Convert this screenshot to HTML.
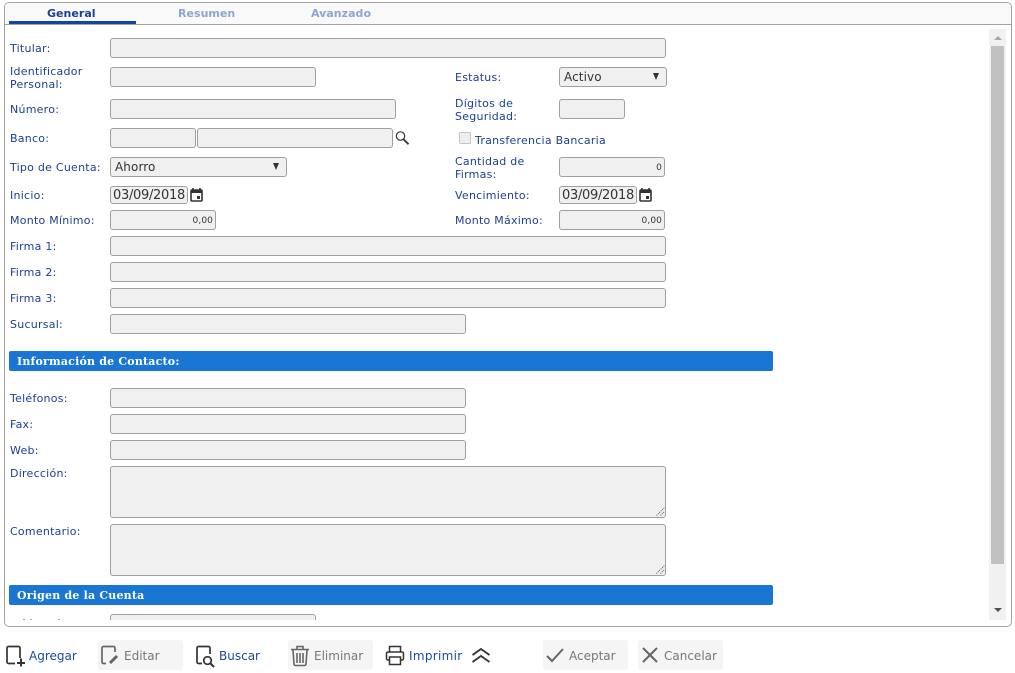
<!DOCTYPE html>
<html lang="es"><head><meta charset="utf-8"><title>Cuenta</title>
<style>
html,body{margin:0;padding:0;background:#fff}
body{width:1015px;height:673px;position:relative;overflow:hidden;font-family:"DejaVu Sans","Liberation Sans",sans-serif}
div,span,svg{position:absolute;box-sizing:border-box}
.panel{left:4px;top:2px;width:1008px;height:625px;border:1px solid #a3a3a3;border-radius:5px}
.tabs{left:5px;top:3px;width:1006px;height:22px;background:#f9f9f9;border-bottom:1px solid #a3a3a3;border-radius:4px 4px 0 0}
.tab{top:7px;font:bold 11px "DejaVu Sans",sans-serif;line-height:14px;color:#8ea6d2;white-space:nowrap;letter-spacing:.03px}
.ink{left:9px;top:21px;width:127px;height:3px;background:#0d47a1}
.l{font-size:11px;line-height:13px;color:#1c3f94;white-space:nowrap;letter-spacing:.25px}
.i{background:#f0f0f0;border:1px solid #a0a0a0;border-radius:3px;height:20px}
.n{font-size:9px;line-height:20px;color:#333;text-align:right;padding-right:2px;letter-spacing:.1px}
.s{font:12px "DejaVu Sans",sans-serif;line-height:19px;color:#333;padding-left:4px;letter-spacing:.1px}
.s:after{content:"";position:absolute;right:7px;top:5px;border:3.5px solid transparent;border-top:7px solid #333;border-bottom:0}
.d{height:18px;font:13px "DejaVu Sans",sans-serif;line-height:18px;color:#333;padding-left:2px;white-space:nowrap;overflow:hidden;width:78px;letter-spacing:-.3px}
.h{left:9px;width:764px;height:20px;background:#1976d2;border-radius:2px;color:#fff;font:bold 11px "DejaVu Serif","DejaVu Sans",sans-serif;line-height:21px;padding-left:8px;letter-spacing:.2px}
.b{height:30px;top:640px;border-radius:3px}
.off{background:#f5f5f5}
.t{top:648px;font:12px "DejaVu Sans",sans-serif;line-height:16px;white-space:nowrap;color:#1c4aa0}
.t.g{color:#777}
</style></head><body>
<div class="panel"></div>
<div class="tabs"></div>
<div class="ink"></div>
<div class="tab" style="left:47px;color:#1c3f94">General</div>
<div class="tab" style="left:178px">Resumen</div>
<div class="tab" style="left:311px">Avanzado</div>

<div class="l" style="left:10px;top:42px">Titular:</div>
<div class="i" style="left:110px;top:38px;width:556px"></div>
<div class="l" style="left:10px;top:65px">Identificador<br>Personal:</div>
<div class="i" style="left:110px;top:67px;width:206px"></div>
<div class="l" style="left:455px;top:71px">Estatus:</div>
<div class="i s" style="left:559px;top:67px;width:108px">Activo</div>
<div class="l" style="left:10px;top:103px">Número:</div>
<div class="i" style="left:110px;top:99px;width:286px"></div>
<div class="l" style="left:455px;top:97px">Dígitos de<br>Seguridad:</div>
<div class="i" style="left:559px;top:99px;width:66px"></div>
<div class="l" style="left:10px;top:132px">Banco:</div>
<div class="i" style="left:110px;top:128px;width:86px"></div>
<div class="i" style="left:197px;top:128px;width:196px"></div>
<svg style="left:394px;top:130px" width="16" height="16" viewBox="0 0 16 16"><circle cx="6.5" cy="6" r="4.2" fill="none" stroke="#333" stroke-width="1.2"/><path d="M9.5 9.2L14.5 14.3" stroke="#333" stroke-width="1.800"/></svg>
<div style="left:459px;top:132px;width:12px;height:12px;background:#eee;border:1px solid #c4c4c4;border-radius:2px"></div>
<div class="l" style="left:475px;top:134px">Transferencia Bancaria</div>
<div class="l" style="left:10px;top:161px">Tipo de Cuenta:</div>
<div class="i s" style="left:110px;top:157px;width:177px">Ahorro</div>
<div class="l" style="left:455px;top:155px">Cantidad de<br>Firmas:</div>
<div class="i n" style="left:559px;top:157px;width:106px">0</div>
<div class="l" style="left:10px;top:189px">Inicio:</div>
<div class="i d" style="left:110px;top:186px">03/09/2018</div>
<svg style="left:190px;top:188px" width="13" height="14" viewBox="0 0 13 14"><path d="M3 0v2M10 0v2" stroke="#333" stroke-width="1.6"/><rect x="1" y="2" width="11" height="11" rx="1" fill="none" stroke="#333" stroke-width="1.6"/><rect x="1" y="2" width="11" height="3" fill="#333"/><rect x="7" y="8" width="3" height="3" fill="#333"/></svg>
<div class="l" style="left:455px;top:189px">Vencimiento:</div>
<div class="i d" style="left:559px;top:186px">03/09/2018</div>
<svg style="left:639px;top:188px" width="13" height="14" viewBox="0 0 13 14"><path d="M3 0v2M10 0v2" stroke="#333" stroke-width="1.6"/><rect x="1" y="2" width="11" height="11" rx="1" fill="none" stroke="#333" stroke-width="1.6"/><rect x="1" y="2" width="11" height="3" fill="#333"/><rect x="7" y="8" width="3" height="3" fill="#333"/></svg>
<div class="l" style="left:10px;top:214px">Monto Mínimo:</div>
<div class="i n" style="left:110px;top:210px;width:106px">0,00</div>
<div class="l" style="left:455px;top:214px">Monto Máximo:</div>
<div class="i n" style="left:559px;top:210px;width:106px">0,00</div>
<div class="l" style="left:10px;top:240px">Firma 1:</div>
<div class="i" style="left:110px;top:236px;width:556px"></div>
<div class="l" style="left:10px;top:266px">Firma 2:</div>
<div class="i" style="left:110px;top:262px;width:556px"></div>
<div class="l" style="left:10px;top:292px">Firma 3:</div>
<div class="i" style="left:110px;top:288px;width:556px"></div>
<div class="l" style="left:10px;top:318px">Sucursal:</div>
<div class="i" style="left:110px;top:314px;width:356px"></div>

<div class="h" style="top:351px">Información de Contacto:</div>
<div class="l" style="left:10px;top:392px">Teléfonos:</div>
<div class="i" style="left:110px;top:388px;width:356px"></div>
<div class="l" style="left:10px;top:418px">Fax:</div>
<div class="i" style="left:110px;top:414px;width:356px"></div>
<div class="l" style="left:10px;top:444px">Web:</div>
<div class="i" style="left:110px;top:440px;width:356px"></div>
<div class="l" style="left:10px;top:467px">Dirección:</div>
<div class="i" style="left:110px;top:466px;width:556px;height:52px"></div>
<svg style="left:656px;top:507px" width="9" height="9" viewBox="0 0 9 9"><path d="M0.5 8.5L8.5 0.5M4.5 8.5L8.5 4.5" stroke="#555" stroke-width="1" stroke-dasharray="1 1"/></svg>
<div class="l" style="left:10px;top:525px">Comentario:</div>
<div class="i" style="left:110px;top:524px;width:556px;height:52px"></div>
<svg style="left:656px;top:565px" width="9" height="9" viewBox="0 0 9 9"><path d="M0.5 8.5L8.5 0.5M4.5 8.5L8.5 4.5" stroke="#555" stroke-width="1" stroke-dasharray="1 1"/></svg>
<div class="h" style="top:585px">Origen de la Cuenta</div>
<div style="left:110px;top:614px;width:206px;height:6px;overflow:hidden"><div class="i" style="left:0;top:0;width:206px"></div></div>
<div style="left:23px;top:619px;width:2px;height:1px;background:#7fb0d8"></div>
<div style="left:30px;top:619px;width:2px;height:1px;background:#c9a9b8"></div>
<div style="left:58px;top:619px;width:2px;height:1px;background:#b5a9c9"></div>

<div style="left:989px;top:29px;width:17px;height:591px;background:#f1f1f1"></div>
<div style="left:991px;top:46px;width:13px;height:518px;background:#c1c1c1"></div>
<div style="left:994px;top:36px;border:4px solid transparent;border-top:0;border-bottom:4px solid #a8a8a8"></div>
<div style="left:994px;top:608px;border:4px solid transparent;border-bottom:0;border-top:4px solid #505050"></div>

<svg style="left:5px;top:645px" width="20" height="23" viewBox="0 0 20 23" fill="none" stroke="#333" stroke-width="1.7"><path d="M15 13V3a1.500 1.500 0 0 0-1.500-1.500h-10A1.500 1.500 0 0 0 2 3v14a1.500 1.500 0 0 0 1.500 1.500H10"/><path d="M16 13.500v8M12 18h8" stroke-width="2"/></svg>
<div class="t" style="left:29px">Agregar</div>

<div class="b off" style="left:98px;width:85px"></div>
<svg style="left:100px;top:645px" width="20" height="21" viewBox="0 0 20 21" fill="none" stroke="#666" stroke-width="1.700"><path d="M15 7V3a1.500 1.500 0 0 0-1.500-1.500h-10A1.500 1.500 0 0 0 2 3v14a1.500 1.500 0 0 0 1.500 1.500H6"/><path d="M10 18l7-7" stroke-width="3"/></svg>
<div class="t g" style="left:124px">Editar</div>

<svg style="left:195px;top:645px" width="20" height="23" viewBox="0 0 20 23" fill="none" stroke="#333" stroke-width="1.700"><path d="M15 9V3a1.500 1.500 0 0 0-1.500-1.500h-10A1.500 1.500 0 0 0 2 3v14a1.500 1.500 0 0 0 1.500 1.500H7"/><circle cx="12.500" cy="15.500" r="3.800"/><path d="M15.500 18.500L19 22" stroke-width="2"/></svg>
<div class="t" style="left:219px">Buscar</div>

<div class="b off" style="left:288px;width:85px"></div>
<svg style="left:290px;top:645px" width="20" height="22" viewBox="0 0 20 22" fill="none" stroke="#666" stroke-width="1.600"><path d="M1 4.500h18M7 4V1.500h6V4" /><path d="M3 5l1 14a1.500 1.500 0 0 0 1.500 1.500h9A1.500 1.500 0 0 0 16 19l1-14"/><path d="M7 8v10M10 8v10M13 8v10"/></svg>
<div class="t g" style="left:314px">Eliminar</div>

<svg style="left:385px;top:645px" width="20" height="21" viewBox="0 0 20 21" fill="none" stroke="#333" stroke-width="1.500"><path d="M4.500 7V1.500h11V7"/><path d="M4.500 15H3a1.500 1.500 0 0 1-1.500-1.500V8.500A1.500 1.500 0 0 1 3 7h14a1.500 1.500 0 0 1 1.500 1.500v5A1.500 1.500 0 0 1 17 15h-1.500"/><path d="M4.500 12h11v7.500h-11z"/></svg>
<div class="t" style="left:409px;letter-spacing:.3px">Imprimir</div>
<svg style="left:471px;top:646px" width="20" height="18" viewBox="0 0 20 18" fill="none" stroke="#333" stroke-width="1.800"><path d="M1.500 9L10 3l8.500 6M1.500 16L10 10l8.500 6"/></svg>

<div class="b off" style="left:543px;width:85px"></div>
<svg style="left:546px;top:647px" width="18" height="16" viewBox="0 0 18 16" fill="none" stroke="#666" stroke-width="2"><path d="M1 9l5 5L17 2"/></svg>
<div class="t g" style="left:569px">Aceptar</div>

<div class="b off" style="left:638px;width:85px"></div>
<svg style="left:641px;top:646px" width="18" height="18" viewBox="0 0 18 18" fill="none" stroke="#666" stroke-width="2"><path d="M2 2l14 14M16 2L2 16"/></svg>
<div class="t g" style="left:664px">Cancelar</div>
</body></html>
